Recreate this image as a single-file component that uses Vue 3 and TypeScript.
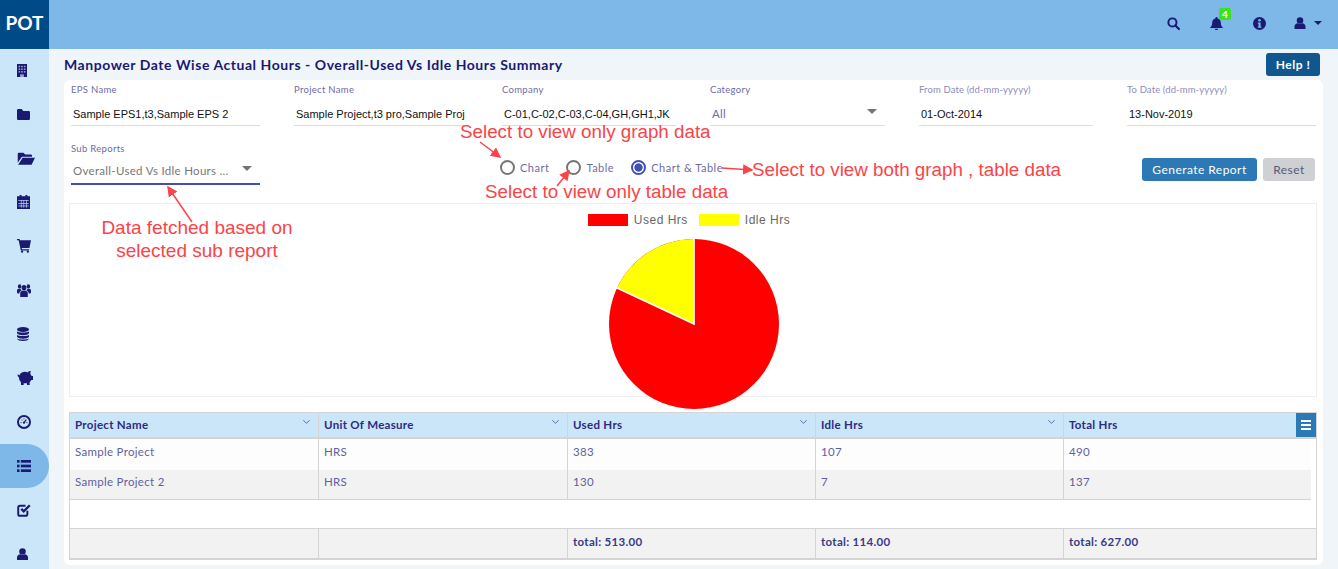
<template>
  <div class="shell">
    <header class="topbar">
      <div class="logo">POT</div>
      <div class="top-actions">
        <svg class="top-icon" viewBox="0 0 24 24"><circle cx="10" cy="10" r="7.500" fill="none" stroke="currentColor" stroke-width="3.600"/><path d="M15.500 15.500 22 22" stroke="currentColor" stroke-width="4" stroke-linecap="round"/></svg>
        <div class="bell-wrap">
          <svg class="top-icon" viewBox="0 0 24 24"><path fill="currentColor" d="M12 0a2 2 0 0 1 2 2v.8c3.800.9 6 3.800 6 7.700 0 4.500 1 6 3.500 8.500v1.500H.5V19C3 16.500 4 15 4 10.500c0-3.900 2.200-6.800 6-7.700V2a2 2 0 0 1 2-2zM9 21.500h6a3 3 0 0 1-6 0z"/></svg>
          <span class="badge">4</span>
        </div>
        <svg class="top-icon" viewBox="0 0 24 24"><circle cx="12" cy="12" r="12" fill="currentColor"/><path fill="#7db8e8" d="M9 10h5v7.500h1.500V20h-6.500v-2.500h1.300v-5H9z"/><circle cx="12" cy="6" r="2.500" fill="#7db8e8"/></svg>
        <div class="user-menu">
          <svg class="user-icon" viewBox="0 0 24 24"><circle cx="12" cy="7" r="6.500" fill="currentColor"/><path fill="currentColor" d="M1 24v-5c0-4 3-6.500 6.500-6.500 1 .8 2.800 1.300 4.500 1.300s3.500-.5 4.500-1.300c3.500 0 6.500 2.500 6.500 6.500v5z"/></svg>
          <span class="caret"></span>
        </div>
      </div>
    </header>

    <div class="body-row">
      <aside class="sidebar">
        <div v-for="item in menu" :key="item.name" class="side-item" :class="{ active: item.name === 'reports' }">
          <svg :width="item.w" :height="item.h" :viewBox="item.vb" preserveAspectRatio="none" v-html="item.svg"></svg>
        </div>
      </aside>

      <main class="content">
        <div class="title-row">
          <h1>Manpower Date Wise Actual Hours - Overall-Used Vs Idle Hours Summary</h1>
          <button class="help-btn">Help !</button>
        </div>

        <section class="card">
          <div class="filters">
            <div v-for="f in fields" :key="f.label" class="field" :style="{ width: f.width + 'px', marginRight: f.gap + 'px' }">
              <label :class="{ date: f.date }">{{ f.label }}</label>
              <div class="value" :class="{ muted: f.select }">
                <span>{{ f.value }}</span>
                <i v-if="f.select" class="select-caret"></i>
              </div>
            </div>
          </div>

          <div class="controls">
            <div class="field sub-report">
              <label>Sub Reports</label>
              <div class="value muted focused">
                <span>Overall-Used Vs Idle Hours ...</span>
                <i class="select-caret"></i>
              </div>
            </div>
            <div class="radios">
              <label class="radio"><i class="dot"></i>Chart</label>
              <label class="radio"><i class="dot"></i>Table</label>
              <label class="radio on"><i class="dot"></i>Chart &amp; Table</label>
            </div>
            <div class="buttons">
              <button class="btn-primary">Generate Report</button>
              <button class="btn-reset">Reset</button>
            </div>
          </div>

          <div class="chart-box">
            <div class="legend">
              <i class="swatch red"></i><span>Used Hrs</span>
              <i class="swatch yellow"></i><span>Idle Hrs</span>
            </div>
            <svg class="pie" width="172" height="172" viewBox="-86 -86 172 172">
              <circle r="85" fill="#ff0000"/>
              <path d="M0 0 L-77 -36 A85 85 0 0 1 0 -85 Z" fill="#ffff00"/>
              <path d="M-78 -36.500 L0 0 L0 -86" fill="none" stroke="#fff" stroke-width="1.600"/>
            </svg>
          </div>

          <div class="grid-table">
            <div class="tr head">
              <div v-for="h in columns" :key="h" class="td">
                {{ h }}
                <svg class="chev" viewBox="0 0 10 6"><path d="M1.500 1 5 4.500 8.500 1" fill="none" stroke="currentColor" stroke-width="1.100"/></svg>
              </div>
              <div class="menu-btn"><i></i><i></i><i></i></div>
            </div>
            <div v-for="(r, i) in rows" :key="i" class="tr row" :class="{ alt: i === 1 }">
              <div v-for="(c, j) in r" :key="j" class="td">{{ c }}</div>
            </div>
            <div class="tr blank"></div>
            <div class="tr foot">
              <div v-for="(c, j) in totals" :key="j" class="td">{{ c }}</div>
            </div>
          </div>
        </section>

        <!-- callouts drawn over the form -->
        <div class="note" style="left: 411px; top: 71px">Select to view only graph data</div>
        <div class="note" style="left: 436px; top: 131px">Select to view only table data</div>
        <div class="note" style="left: 703px; top: 109px">Select to view both graph , table data</div>
        <div class="note center" style="left: 28px; top: 168px; width: 240px">Data fetched based on<br />selected sub report</div>
        <svg class="arrows" width="1289" height="520" viewBox="0 0 1289 520">
          <defs>
            <marker id="ah" markerWidth="8" markerHeight="8" refX="6" refY="3.500" orient="auto">
              <path d="M0 0 7 3.500 0 7z" fill="#fb4448"/>
            </marker>
          </defs>
          <path d="M431 93 451 108" class="arrow" />
          <path d="M508 137 520 122" class="arrow" />
          <path d="M673 119 703 121" class="arrow" />
          <path d="M143 173 119 138" class="arrow" />
        </svg>
      </main>
    </div>
  </div>
</template>

<script setup lang="ts">
interface Field {
  label: string
  value: string
  width: number
  gap: number
  select?: boolean
  date?: boolean
}

const fields: Field[] = [
  { label: 'EPS Name', value: 'Sample EPS1,t3,Sample EPS 2', width: 189, gap: 34 },
  { label: 'Project Name', value: 'Sample Project,t3 pro,Sample Proj', width: 174, gap: 34 },
  { label: 'Company', value: 'C-01,C-02,C-03,C-04,GH,GH1,JK', width: 174, gap: 34 },
  { label: 'Category', value: 'All', width: 175, gap: 34, select: true },
  { label: 'From Date (dd-mm-yyyyy)', value: '01-Oct-2014', width: 174, gap: 34, date: true },
  { label: 'To Date (dd-mm-yyyyy)', value: '13-Nov-2019', width: 189, gap: 0, date: true }
]

const columns = ['Project Name', 'Unit Of Measure', 'Used Hrs', 'Idle Hrs', 'Total Hrs']
const rows = [
  ['Sample Project', 'HRS', '383', '107', '490'],
  ['Sample Project 2', 'HRS', '130', '7', '137']
]
const totals = ['', '', 'total: 513.00', 'total: 114.00', 'total: 627.00']

const menu = [
  { name: 'building', w: 10, h: 13, vb: '4 1 16 22', svg: '<path fill="currentColor" d="M4 1h16v22H4z"/><g fill="#cbe5f9" fill-opacity=".7"><rect x="6.500" y="4" width="2.500" height="2.500"/><rect x="10.700" y="4" width="2.500" height="2.500"/><rect x="15" y="4" width="2.500" height="2.500"/><rect x="6.500" y="8.500" width="2.500" height="2.500"/><rect x="10.700" y="8.500" width="2.500" height="2.500"/><rect x="15" y="8.500" width="2.500" height="2.500"/><rect x="6.500" y="13" width="2.500" height="2.500"/><rect x="10.700" y="13" width="2.500" height="2.500"/><rect x="15" y="13" width="2.500" height="2.500"/><rect x="9" y="18.500" width="6" height="4.500"/></g>' },
  { name: 'folder', w: 13, h: 11, vb: '1 4 22 17', svg: '<path fill="currentColor" d="M1 6a2 2 0 0 1 2-2h6l2.500 3H21a2 2 0 0 1 2 2v10a2 2 0 0 1-2 2H3a2 2 0 0 1-2-2z"/>' },
  { name: 'folder-open', w: 18, h: 13, vb: '0 3 24 18', svg: '<path fill="currentColor" d="M1 5.500A1.500 1.500 0 0 1 2.500 4h6L11 6.500h7.500A1.500 1.500 0 0 1 20 8v1.500H6.500L1 18zM7.500 11H24l-4.500 9.500H1.500z"/>' },
  { name: 'calendar', w: 13, h: 14, vb: '2 2 20 21', svg: '<path fill="currentColor" d="M2 4h4V2h3v2h6V2h3v2h4v19H2z"/><g fill="#cbe5f9"><rect x="4" y="10" width="16" height="1"/><rect x="4" y="14" width="16" height="1"/><rect x="4" y="18" width="16" height="1"/><rect x="8" y="10" width="1" height="11"/><rect x="12" y="10" width="1" height="11"/><rect x="16" y="10" width="1" height="11"/></g>' },
  { name: 'cart', w: 14, h: 14, vb: '1 2 22 22', svg: '<path fill="currentColor" d="M1 2h4l.6 2H23l-2.500 12H8.500l.4 2H20v2H7L3.600 4H1z"/><circle cx="9" cy="22" r="1.800" fill="currentColor"/><circle cx="18" cy="22" r="1.800" fill="currentColor"/>' },
  { name: 'users', w: 14, h: 13, vb: '0 3 24 19', svg: '<g fill="currentColor"><circle cx="12" cy="8.500" r="4"/><circle cx="4.500" cy="6.500" r="3"/><circle cx="19.500" cy="6.500" r="3"/><path d="M5.500 22v-5c0-2.500 2-4 4-4h5c2 0 4 1.500 4 4v5z"/><path d="M0 15v-2c0-2 1-3 3-3h3c.5 1 1 2 2 2.500-2.500 1-4 2.500-4 4.500H1z"/><path d="M24 15v-2c0-2-1-3-3-3h-3c-.5 1-1 2-2 2.500 2.500 1 4 2.500 4 4.500h3z"/></g>' },
  { name: 'database', w: 12, h: 14, vb: '2 1 20 22', svg: '<g fill="currentColor"><ellipse cx="12" cy="5" rx="10" ry="4"/><path d="M2 7.500c2 3 18 3 20 0V11c-2 4-18 4-20 0z"/><path d="M2 13c2 3 18 3 20 0v3.500c-2 4-18 4-20 0z"/><path d="M2 18.500c2 3 18 3 20 0v.5c-1 5.300-19 5.300-20 0z"/></g>' },
  { name: 'piggy', w: 16, h: 14, vb: '0 5 24 17', svg: '<path fill="currentColor" d="M1 9c1 0 2 1 2.500 1.500C5 7.500 8 6 12 6c1.500 0 3 .3 4 .8C17 5.500 19 5 20.500 5l-.6 3.500c1 .8 1.600 1.700 2 2.500H24v5h-2.500c-.6 1-1.500 2-2.500 2.500V22h-4v-2H10v2H6v-3.500C4 17 3 15 2.800 12.500 1.500 12 .5 11 1 9z"/>' },
  { name: 'gauge', w: 14, h: 14, vb: '0 0 24 24', svg: '<circle cx="12" cy="12" r="10.300" fill="none" stroke="currentColor" stroke-width="3.400"/><path d="M12 13 16 8" stroke="currentColor" stroke-width="2"/><circle cx="12" cy="13" r="2" fill="currentColor"/><g fill="currentColor"><circle cx="7" cy="13" r="1"/><circle cx="8.500" cy="8.500" r="1"/><circle cx="12" cy="6.500" r="1"/><circle cx="17" cy="13" r="1"/></g>' },
  { name: 'reports', w: 14, h: 12, vb: '1 3 22 18', svg: '<g fill="currentColor"><rect x="1" y="3" width="4" height="4"/><rect x="7" y="3" width="16" height="4"/><rect x="1" y="10" width="4" height="4"/><rect x="7" y="10" width="16" height="4"/><rect x="1" y="17" width="4" height="4"/><rect x="7" y="17" width="16" height="4"/></g>' },
  { name: 'check', w: 14, h: 13, vb: '1 2 23 21', svg: '<path fill="none" stroke="currentColor" stroke-width="3.200" d="M18 13v5a3 3 0 0 1-3 3H6a3 3 0 0 1-3-3V8a3 3 0 0 1 3-3h9"/><path fill="none" stroke="currentColor" stroke-width="3.800" d="m8 10 4 4 10-10"/>' },
  { name: 'user', w: 11, h: 12, vb: '1 0 22 24', svg: '<circle cx="12" cy="7" r="6.500" fill="currentColor"/><path fill="currentColor" d="M1 24v-5c0-4 3-6.500 6.500-6.500 1 .8 2.800 1.300 4.500 1.300s3.500-.5 4.500-1.300c3.500 0 6.500 2.500 6.500 6.500v5z"/>' }
]
</script>

<style scoped>
.shell {
  width: 1338px;
  height: 569px;
  overflow: hidden;
  display: flex;
  flex-direction: column;
  background: #f0f5f9;
  font-family: Lato, 'Liberation Sans', sans-serif;
}
.topbar {
  height: 49px;
  flex: none;
  display: flex;
  align-items: center;
  justify-content: space-between;
  background: #7db8e8;
  color: #1a1a72;
}
.logo {
  width: 49px;
  height: 49px;
  background: #004b87;
  color: #fff;
  font-size: 19px;
  font-weight: 700;
  line-height: 45px;
  text-align: center;
}
.top-actions {
  display: flex;
  align-items: center;
  gap: 30px;
  padding: 0 16px 3px 0;
}
.top-icon {
  width: 13px;
  height: 13px;
  display: block;
}
.user-icon {
  width: 12px;
  height: 12px;
  display: block;
}
.bell-wrap {
  position: relative;
}
.badge {
  position: absolute;
  left: 9px;
  top: -9px;
  width: 12px;
  height: 12px;
  border-radius: 2px;
  background: #3fe01f;
  color: #fff;
  font-size: 10px;
  font-weight: 700;
  line-height: 12px;
  text-align: center;
}
.user-menu {
  display: flex;
  align-items: center;
  gap: 8px;
  margin-left: -2px;
}
.caret {
  border-left: 4px solid transparent;
  border-right: 4px solid transparent;
  border-top: 4px solid #1a1a72;
}
.body-row {
  flex: 1;
  min-height: 0;
  display: flex;
}
.sidebar {
  width: 49px;
  flex: none;
  background: #cbe5f9;
  color: #1a1a72;
}
.side-item {
  height: 44px;
  display: flex;
  align-items: center;
  padding-left: 17px;
  box-sizing: border-box;
}
.side-item:first-child {
  margin-top: -1px;
}
.side-item.active {
  background: #7db8e8;
  border-radius: 0 22px 22px 0;
}
.content {
  position: relative;
  flex: 1;
  min-width: 0;
  padding: 0 15px;
}
.title-row {
  height: 31px;
  display: flex;
  align-items: center;
  justify-content: space-between;
  padding-right: 3px;
}
h1 {
  margin: 0;
  font-size: 14px;
  font-weight: 700;
  letter-spacing: 0.545px;
  color: #1a1a72;
}
.help-btn {
  width: 54px;
  height: 23px;
  border: 0;
  border-radius: 3px;
  background: #10568f;
  color: #fff;
  font: 700 12px Lato, sans-serif;
  letter-spacing: 0.5px;
}
.card {
  height: 485px;
  border-radius: 6px;
  background: #fff;
  padding: 0 6px 0 5px;
}
.filters {
  display: flex;
  padding: 4px 0 0 2px;
}
.field label {
  display: block;
  height: 13px;
  font-size: 9.500px;
  line-height: 12px;
  letter-spacing: 0.3px;
  color: #6e6ba8;
}
.field label.date {
  letter-spacing: 0.12px;
  color: #8f8db8;
}
.value {
  height: 25px;
  margin-top: 4px;
  padding: 1px 2px 0;
  box-sizing: border-box;
  display: flex;
  align-items: center;
  justify-content: space-between;
  border-bottom: 1px solid #dcdcdc;
  font: 11px 'Liberation Sans', sans-serif;
  color: #111;
  white-space: nowrap;
  overflow: hidden;
}
.value.muted {
  padding-top: 0;
  font: 11.500px Lato, sans-serif;
  letter-spacing: 0.3px;
  color: #6e6ba8;
}
.value.focused {
  padding-bottom: 2px;
  color: #777;
  border-bottom: 2px solid #3f51b5;
}
.select-caret {
  flex: none;
  margin-right: 6px;
  margin-top: -4px;
  border-left: 5px solid transparent;
  border-right: 5px solid transparent;
  border-top: 5px solid #757575;
}
.controls {
  display: flex;
  align-items: flex-start;
  margin-top: 17px;
  padding-left: 2px;
}
.sub-report {
  width: 189px;
}
.radios {
  display: flex;
  gap: 17px;
  margin: 17px 0 0 240px;
}
.radio {
  display: flex;
  align-items: center;
  gap: 5px;
  font-size: 11px;
  letter-spacing: 0.5px;
  color: #6e6ba8;
}
.dot {
  width: 15px;
  height: 15px;
  box-sizing: border-box;
  border: 2px solid #757575;
  border-radius: 50%;
  background: #fff;
}
.radio.on .dot {
  border-color: #3f51b5;
  background: radial-gradient(circle, #3f51b5 0 3.800px, #fff 4.500px);
}
.buttons {
  margin-left: auto;
  margin-right: 2px;
  padding-top: 15px;
  display: flex;
  gap: 6px;
}
.btn-primary,
.btn-reset {
  height: 23px;
  border: 0;
  border-radius: 3px;
  font: 12px Lato, sans-serif;
  letter-spacing: 0.45px;
}
.btn-primary {
  width: 115px;
  background: #2d79b6;
  color: #fff;
}
.btn-reset {
  width: 52px;
  background: #ced0d4;
  color: #5a5a7a;
}
.chart-box {
  height: 194px;
  margin-top: 18px;
  border: 1px solid #eee;
  box-sizing: border-box;
  display: flex;
  flex-direction: column;
  align-items: center;
}
.legend {
  height: 12px;
  margin: 10px 8px 0 0;
  display: flex;
  align-items: center;
  font: 12px 'Liberation Sans', sans-serif;
  letter-spacing: 0.5px;
  color: #666;
}
.swatch {
  width: 40px;
  height: 12px;
}
.swatch.red {
  background: #f00;
  margin-right: 6px;
}
.swatch.yellow {
  background: #ff0;
  margin: 0 6px 0 11px;
}
.pie {
  margin: 12px 0 0 2px;
  flex: none;
}
.grid-table {
  margin-top: 15px;
  border: 1px solid #d4d4d4;
  border-bottom-width: 2px;
  font-size: 11.500px;
  letter-spacing: 0.3px;
  color: #5f5fa2;
}
.tr {
  display: grid;
  grid-template-columns: 249px 249px 248px 248px 1fr;
  box-sizing: border-box;
  position: relative;
}
.td {
  position: relative;
  box-sizing: border-box;
  padding: 0 5px;
  border-right: 1px solid #d4d4d4;
}
.td:nth-child(5) {
  border-right: 0;
}
.head {
  height: 26px;
  background: #cbe5f9;
  border-bottom: 2px solid #d4d4d4;
  font-weight: 700;
  color: #2b2b85;
  line-height: 24px;
}
.chev {
  position: absolute;
  right: 7px;
  top: 6px;
  width: 9px;
  height: 6px;
  color: #5a6aa0;
}
.menu-btn {
  position: absolute;
  right: 0;
  top: 0;
  width: 20px;
  height: 24px;
  background: #2d79b6;
  display: flex;
  flex-direction: column;
  align-items: center;
  justify-content: center;
  gap: 2px;
}
.menu-btn i {
  width: 10px;
  height: 2px;
  background: #fff;
}
.row {
  height: 31px;
  line-height: 26px;
  background: #fdfdfd;
  margin-right: 5px;
}
.row.alt {
  height: 30px;
  background: #f2f2f2;
  border-bottom: 1px solid #d4d4d4;
  line-height: 24px;
}
.blank {
  height: 28px;
}
.foot {
  height: 30px;
  background: #f2f2f2;
  border-top: 1px solid #d4d4d4;
  font-weight: 700;
  color: #3a3a8c;
  line-height: 25px;
}
.note {
  position: absolute;
  font: 18.800px/23px 'Liberation Sans', sans-serif;
  color: #fb4448;
  white-space: nowrap;
}
.note.center {
  font-size: 19px;
  line-height: 22.500px;
  text-align: center;
}
.arrows {
  position: absolute;
  left: 0;
  top: 0;
  pointer-events: none;
}
.arrow {
  fill: none;
  stroke: #fb4448;
  stroke-width: 1.500;
  marker-end: url(#ah);
}
</style>

<style>
html,
body {
  margin: 0;
  overflow: hidden;
}
</style>
